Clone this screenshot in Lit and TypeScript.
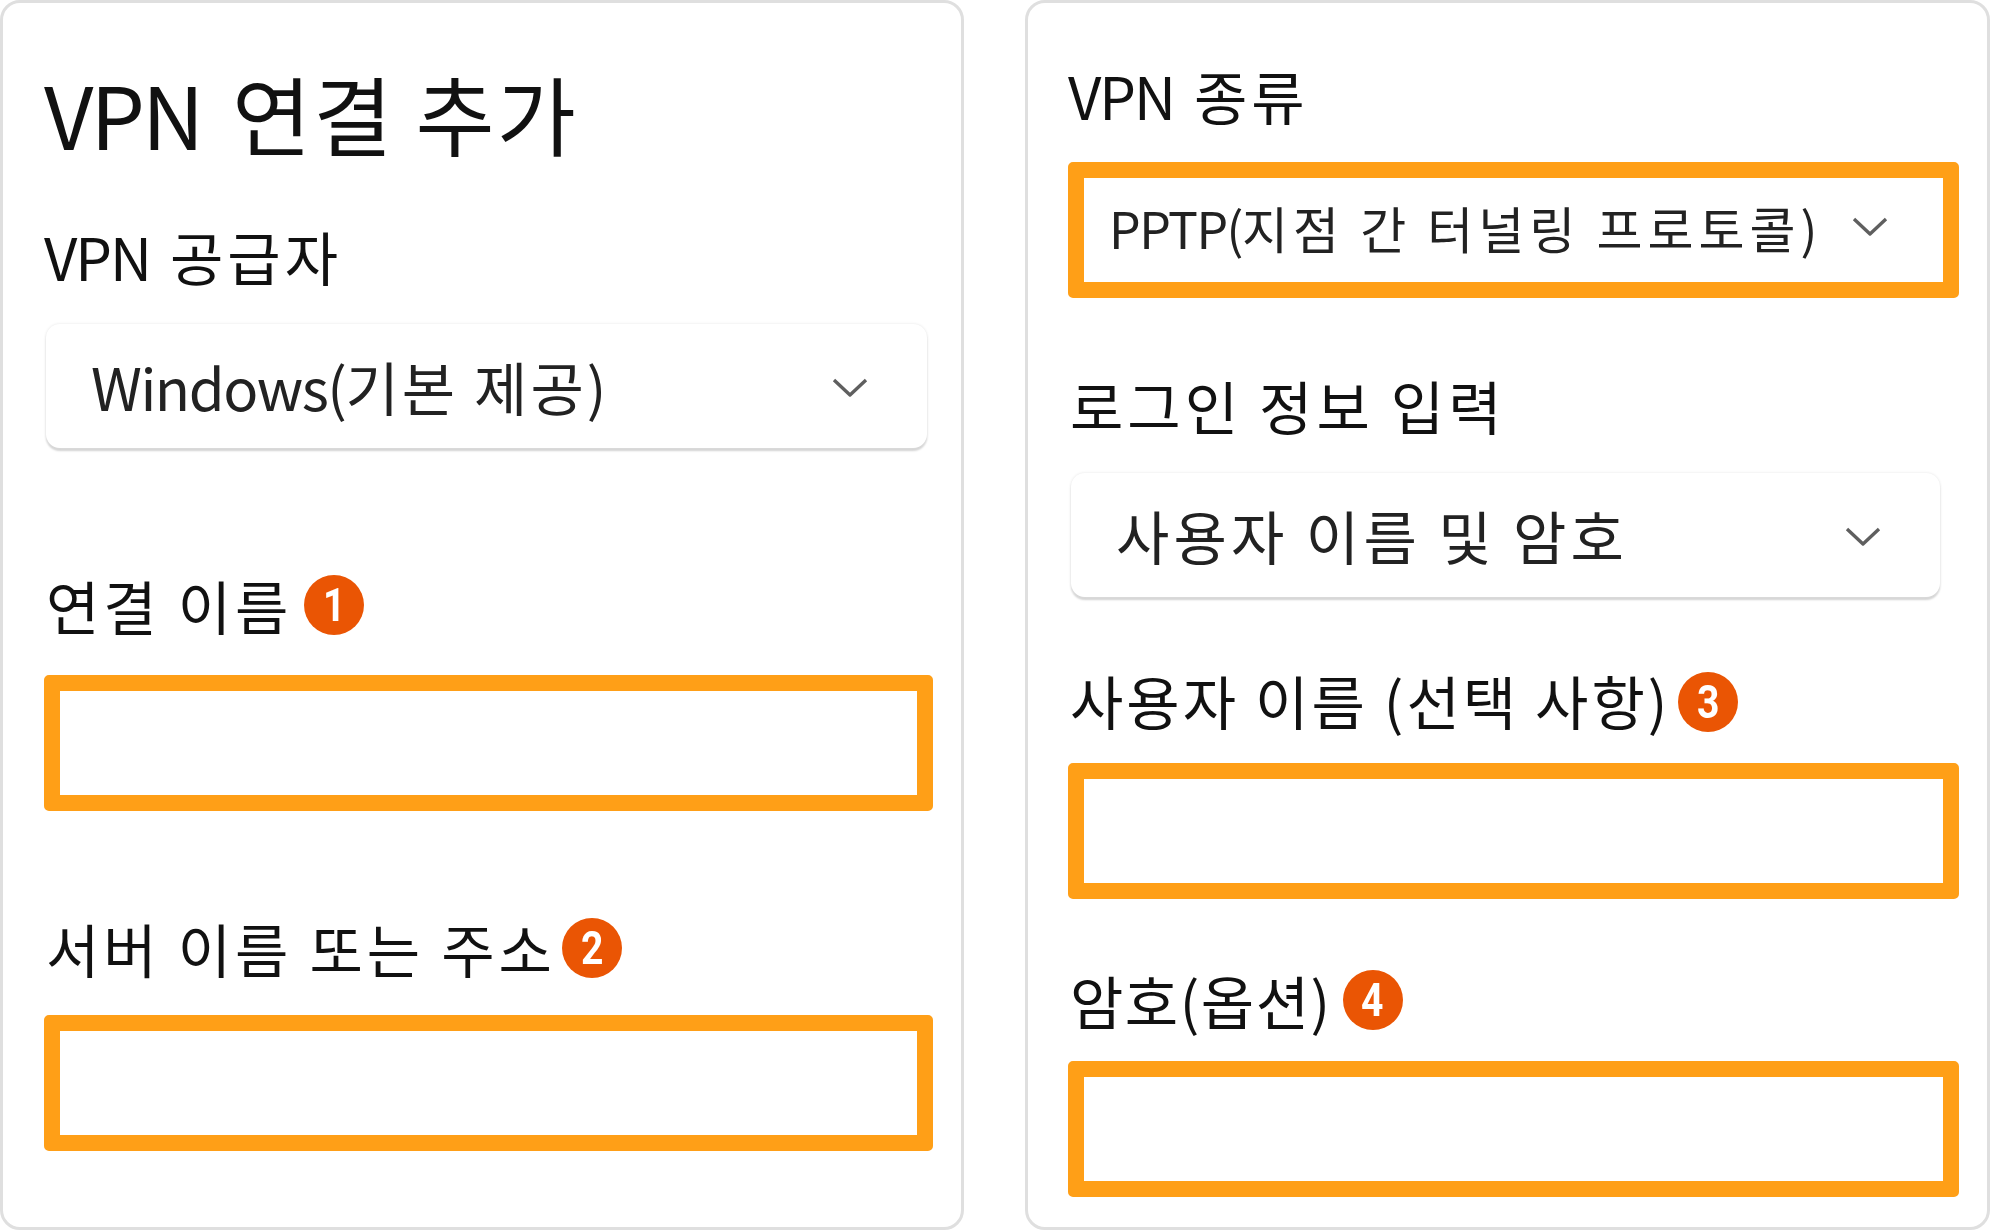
import { LitElement, html, css } from 'lit';
import { customElement } from 'lit/decorators.js';

const chevron = html`<svg class="chevron" width="36" height="22" viewBox="0 0 36 22" fill="none">
  <path d="M2 3 L18 18 L34 3" stroke="#5f5f5f" stroke-width="3.4" stroke-linejoin="round" />
</svg>`;

@customElement('app-root')
export class AppRoot extends LitElement {
  static styles = css`
    :host {
      display: block;
      width: 1990px;
      height: 1230px;
      background: #fff;
      font-family: 'Noto Sans CJK KR', 'Noto Sans', sans-serif;
      color: #111;
    }

    .page {
      display: grid;
      grid-template-columns: 964px 965px;
      column-gap: 61px;
      height: 1230px;
    }

    .panel {
      box-sizing: border-box;
      height: 1230px;
      border: 3px solid #dfdfdf;
      border-radius: 20px;
      display: flex;
      flex-direction: column;
      align-items: flex-start;
      background: #fff;
    }

    .panel.left {
      padding: 60px 0 0 41px;
    }

    .panel.right {
      padding: 57px 0 0 40px;
    }

    h1 {
      margin: 0;
      height: 100px;
      line-height: 100px;
      font-size: 86px;
      font-weight: 400;
      letter-spacing: 2px;
      white-space: nowrap;
      filter: blur(0.6px);
    }

    h1 .latin {
      letter-spacing: -3px;
      margin-right: 31px;
    }

    .label {
      height: 70px;
      line-height: 70px;
      font-size: 58px;
      letter-spacing: 4px;
      white-space: nowrap;
      display: flex;
      align-items: center;
      gap: 12px;
    }

    .label .latin {
      letter-spacing: -2px;
      margin-right: 20px;
    }

    .label.tight {
      gap: 6px;
    }

    .label.username {
      letter-spacing: 3px;
      gap: 8px;
    }

    .label.password {
      letter-spacing: 1.5px;
      gap: 11px;
    }

    .text {
      filter: blur(0.6px);
    }

    .inset {
      margin-left: 2px;
    }

    .badge {
      width: 60px;
      height: 60px;
      border-radius: 50%;
      background: #ea5504;
      color: #fff;
      display: flex;
      align-items: center;
      justify-content: center;
      font-family: Roboto, 'Liberation Sans', sans-serif;
      font-weight: 700;
      font-size: 46px;
      line-height: 1;
      letter-spacing: 0;
      flex: none;
    }

    .badge span {
      display: block;
      transform: scaleX(0.85);
    }

    .label.username .badge {
      margin-top: 3px;
    }

    .select {
      box-sizing: border-box;
      height: 124px;
      background: #fff;
      border-radius: 14px;
      box-shadow: 0 0 3px #e4e4e4, 0 3px 2px #d2d2d2;
      display: flex;
      align-items: center;
      justify-content: space-between;
      font-size: 58px;
      white-space: nowrap;
      color: #222;
    }

    .select .chevron {
      margin-top: 3px;
    }

    .select.provider {
      width: 881px;
      margin-left: 2px;
      padding: 0 59px 0 45px;
      letter-spacing: 3px;
    }

    .select.provider .latin {
      letter-spacing: -1.5px;
    }

    .select.login {
      width: 869px;
      margin-left: 3px;
      padding: 0 59px 0 45px;
      letter-spacing: 4.2px;
    }

    .chevron {
      filter: blur(0.5px);
      flex: none;
    }

    .mark {
      box-sizing: border-box;
      height: 136px;
      border: 16px solid #ff9f17;
      border-radius: 5px;
      background: #fff;
    }

    .left .mark {
      width: 889px;
    }

    .right .mark {
      width: 891px;
    }

    .mark.type {
      display: flex;
      align-items: center;
      justify-content: space-between;
      padding: 0 55px 6px 25px;
      font-size: 50px;
      letter-spacing: 5px;
      white-space: nowrap;
      color: #222;
    }

    .mark.type .latin {
      letter-spacing: -1.5px;
    }

    .mt-26 { margin-top: 26px; }
    .mt-28 { margin-top: 28px; }
    .mt-32 { margin-top: 32px; }
    .mt-33 { margin-top: 33px; }
    .mt-35 { margin-top: 35px; }
    .mt-58 { margin-top: 58px; }
    .mt-66 { margin-top: 66px; }
    .mt-68 { margin-top: 68px; }
    .mt-72 { margin-top: 72px; }
    .mt-102 { margin-top: 102px; }
    .mt-122 { margin-top: 122px; }
  `;

  render() {
    return html`
      <div class="page">
        <section class="panel left">
          <h1><span class="latin">VPN</span>연결 추가</h1>
          <div class="label mt-58"><span class="text"><span class="latin">VPN</span>공급자</span></div>
          <div class="select provider mt-33"><span class="text"><span class="latin">Windows(</span>기본 제공)</span>${chevron}</div>
          <div class="label inset mt-122"><span class="text">연결 이름</span><div class="badge"><span>1</span></div></div>
          <div class="mark mt-35"></div>
          <div class="label inset tight mt-102"><span class="text">서버 이름 또는 주소</span><div class="badge"><span>2</span></div></div>
          <div class="mark mt-32"></div>
        </section>
        <section class="panel right">
          <div class="label"><span class="text"><span class="latin">VPN</span>종류</span></div>
          <div class="mark type mt-32"><span class="text"><span class="latin">PPTP(</span>지점 간 터널링 프로토콜)</span>${chevron}</div>
          <div class="label inset mt-72"><span class="text">로그인 정보 입력</span></div>
          <div class="select login mt-33"><span class="text">사용자 이름 및 암호</span>${chevron}</div>
          <div class="label inset username mt-68"><span class="text">사용자 이름 (선택 사항)</span><div class="badge"><span>3</span></div></div>
          <div class="mark mt-28"></div>
          <div class="label inset password mt-66"><span class="text">암호(옵션)</span><div class="badge"><span>4</span></div></div>
          <div class="mark mt-26"></div>
        </section>
      </div>
    `;
  }
}
